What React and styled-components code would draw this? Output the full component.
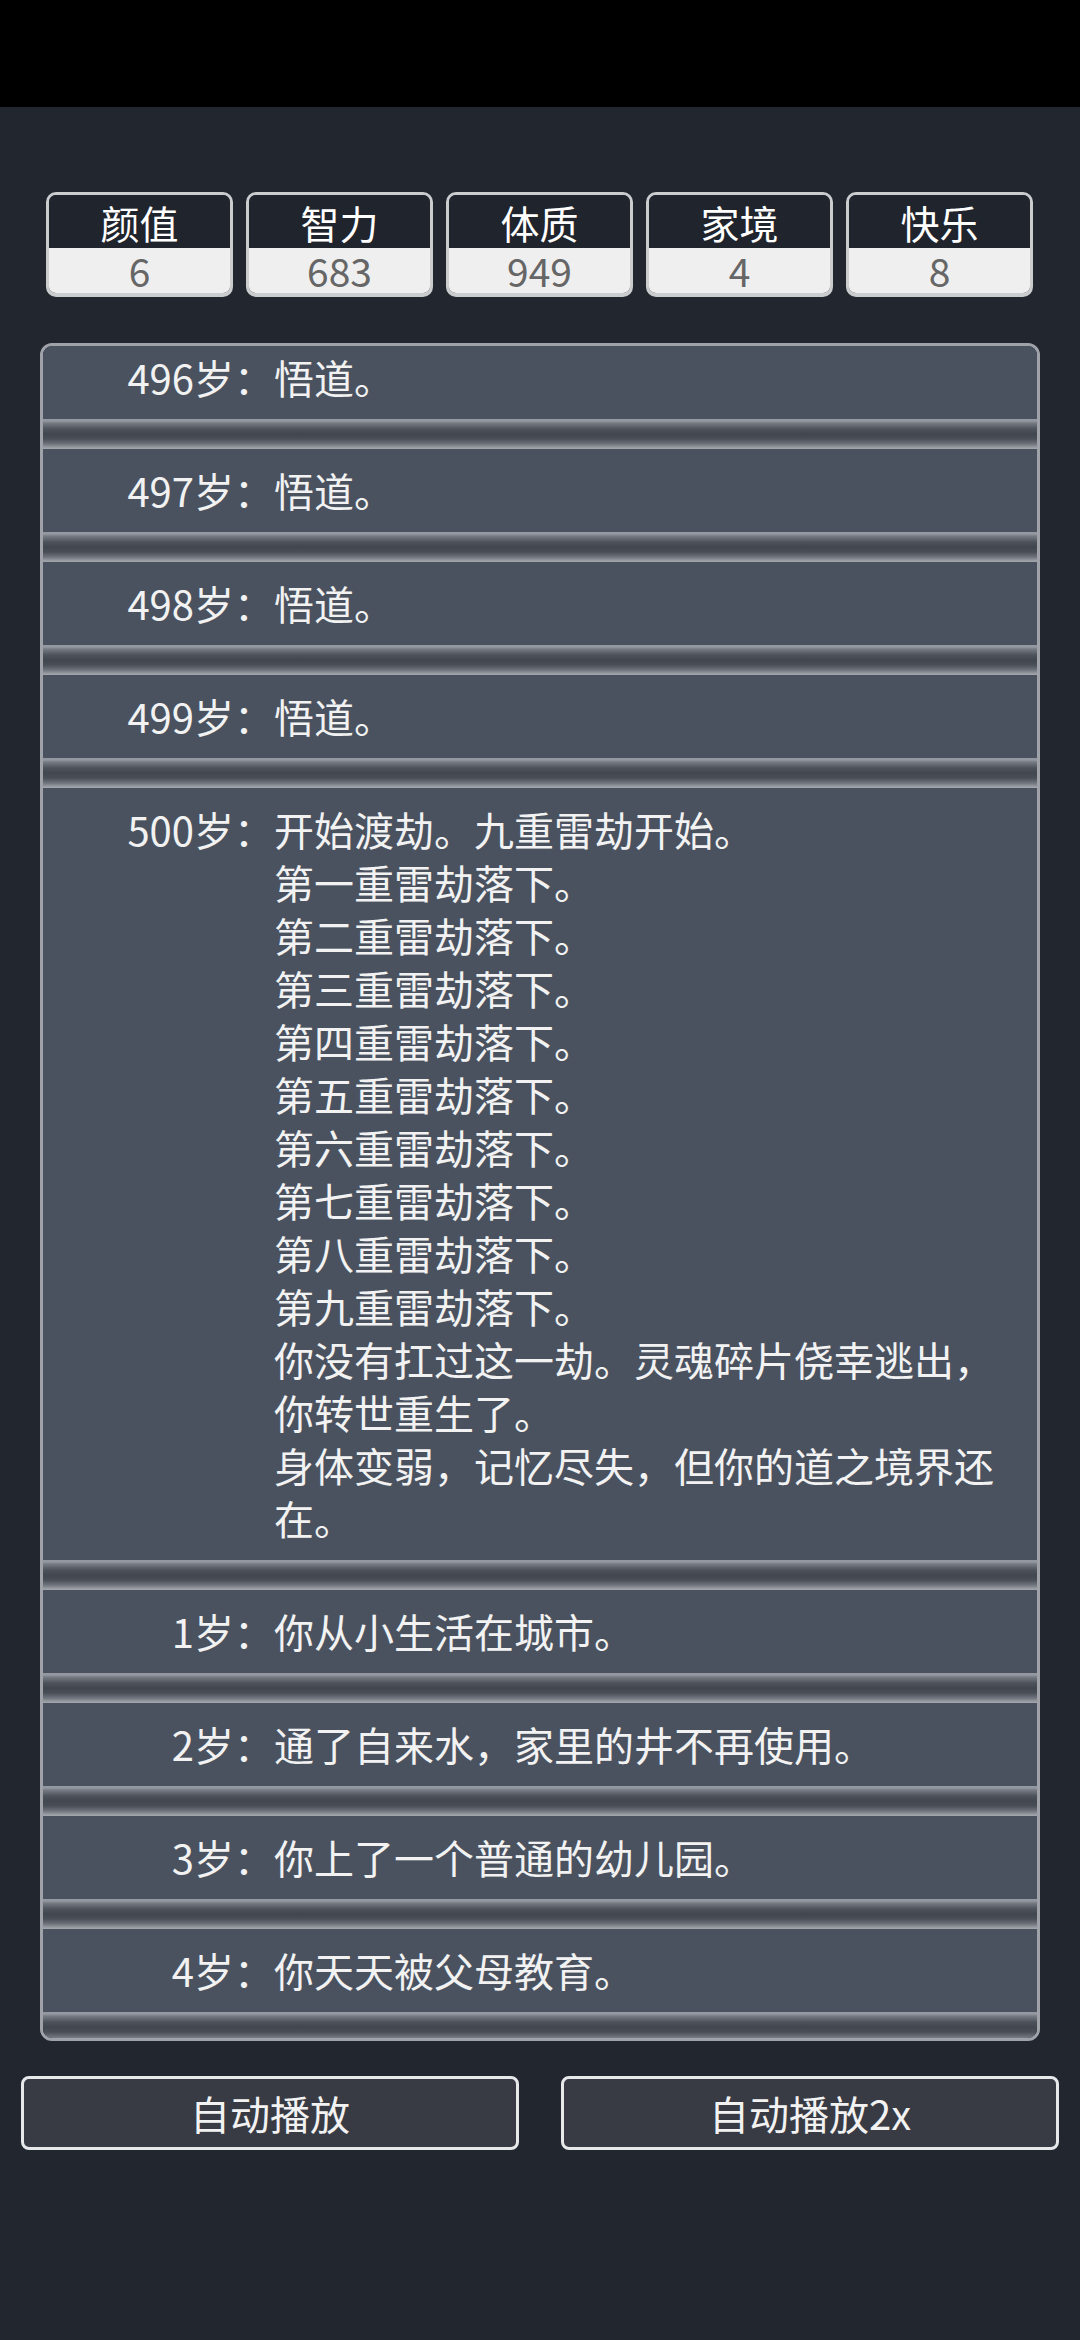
import React, { useLayoutEffect, useRef } from 'react'
import styled, { createGlobalStyle } from 'styled-components'

const GlobalStyle = createGlobalStyle`
  html, body {
    margin: 0;
    padding: 0;
    background: #21262f;
  }
  body {
    font-family: "Noto Sans CJK SC", "Noto Sans", sans-serif;
    color: #f2f2f2;
  }
`

const stats = [
  { name: '颜值', value: 6 },
  { name: '智力', value: 683 },
  { name: '体质', value: 949 },
  { name: '家境', value: 4 },
  { name: '快乐', value: 8 },
]

const events = [
  { age: 496, lines: ['悟道。'] },
  { age: 497, lines: ['悟道。'] },
  { age: 498, lines: ['悟道。'] },
  { age: 499, lines: ['悟道。'] },
  {
    age: 500,
    lines: [
      '开始渡劫。九重雷劫开始。',
      '第一重雷劫落下。',
      '第二重雷劫落下。',
      '第三重雷劫落下。',
      '第四重雷劫落下。',
      '第五重雷劫落下。',
      '第六重雷劫落下。',
      '第七重雷劫落下。',
      '第八重雷劫落下。',
      '第九重雷劫落下。',
      '你没有扛过这一劫。灵魂碎片侥幸逃出，',
      '你转世重生了。',
      '身体变弱，记忆尽失，但你的道之境界还在。',
    ],
  },
  { age: 1, lines: ['你从小生活在城市。'] },
  { age: 2, lines: ['通了自来水，家里的井不再使用。'] },
  { age: 3, lines: ['你上了一个普通的幼儿园。'] },
  { age: 4, lines: ['你天天被父母教育。'] },
]

const App = () => {
  const listRef = useRef(null)

  // the log is scrolled a little, as in the running game
  useLayoutEffect(() => {
    if (listRef.current) listRef.current.scrollTop = 10
  }, [])

  return (
    <Page>
      <GlobalStyle />
      <StatusBar />
      <StatGrid>
        {stats.map(stat => (
          <StatCard key={stat.name}>
            <StatName>{stat.name}</StatName>
            <StatValue>{stat.value}</StatValue>
          </StatCard>
        ))}
      </StatGrid>
      <LogPanel ref={listRef}>
        {events.map(event => (
          <React.Fragment key={event.age}>
            <LogRow>
              <Age>{event.age}岁：</Age>
              <Story>
                {event.lines.map((line, i) => (
                  <Line key={i}>{line}</Line>
                ))}
              </Story>
            </LogRow>
            <Divider />
          </React.Fragment>
        ))}
      </LogPanel>
      <Controls>
        <PlayButton>自动播放</PlayButton>
        <PlayButton>自动播放2x</PlayButton>
      </Controls>
    </Page>
  )
}

export default App

const Page = styled.div`
  width: 1080px;
  min-height: 2340px;
  background: #21262f;
  display: flex;
  flex-direction: column;
`

const StatusBar = styled.div`
  height: 107px;
  background: #000;
`

const StatGrid = styled.div`
  display: grid;
  grid-template-columns: repeat(5, 1fr);
  gap: 13px;
  padding: 85px 47px 0 46px;
`

const StatCard = styled.div`
  height: 105px;
  box-sizing: border-box;
  border: 3px solid #cbccce;
  border-bottom-width: 4px;
  border-radius: 10px;
  overflow: hidden;
  display: flex;
  flex-direction: column;
  font-size: 39px;
  line-height: 1;
`

const StatName = styled.div`
  height: 53px;
  display: flex;
  align-items: center;
  justify-content: center;
  padding-top: 2px;
  box-sizing: border-box;
  background: #1f242d;
  color: #ffffff;
`

const StatValue = styled.div`
  flex: 1;
  display: flex;
  align-items: center;
  justify-content: center;
  background: #efefef;
  color: #666666;
`

const LogPanel = styled.div`
  margin: 46px 40px 0;
  height: 1698px;
  box-sizing: border-box;
  border: 3px solid #9fa3a9;
  border-radius: 12px;
  background: #3b3f48;
  overflow-y: auto;
  scrollbar-width: none;
  &::-webkit-scrollbar {
    display: none;
  }
`

const LogRow = styled.div`
  display: grid;
  grid-template-columns: 231px 1fr;
  padding: 15px 0;
  background: #4a5260;
  font-size: 40px;
  line-height: 53px;
`

const Age = styled.div`
  text-align: right;
  white-space: nowrap;
`

const Story = styled.div`
  display: flex;
  flex-direction: column;
`

const Line = styled.div``

const Divider = styled.div`
  height: 30px;
  background: linear-gradient(
    180deg,
    #9498a0 0px,
    #9498a0 2px,
    #777c84 4px,
    #4e535b 10px,
    #42464e 15px,
    #4a4e56 20px,
    #6f737b 25px,
    #9ea2a8 29px,
    #a3a7ad 30px
  );
`

const Controls = styled.div`
  display: grid;
  grid-template-columns: 1fr 1fr;
  gap: 42px;
  padding: 35px 21px 0;
`

const PlayButton = styled.button`
  height: 74px;
  box-sizing: border-box;
  border: 3px solid #e6e8ea;
  border-radius: 8px;
  background: #383b44;
  color: #f2f2f2;
  font-family: "Noto Sans CJK SC", "Noto Sans", sans-serif;
  font-size: 40px;
  padding: 0;
`
